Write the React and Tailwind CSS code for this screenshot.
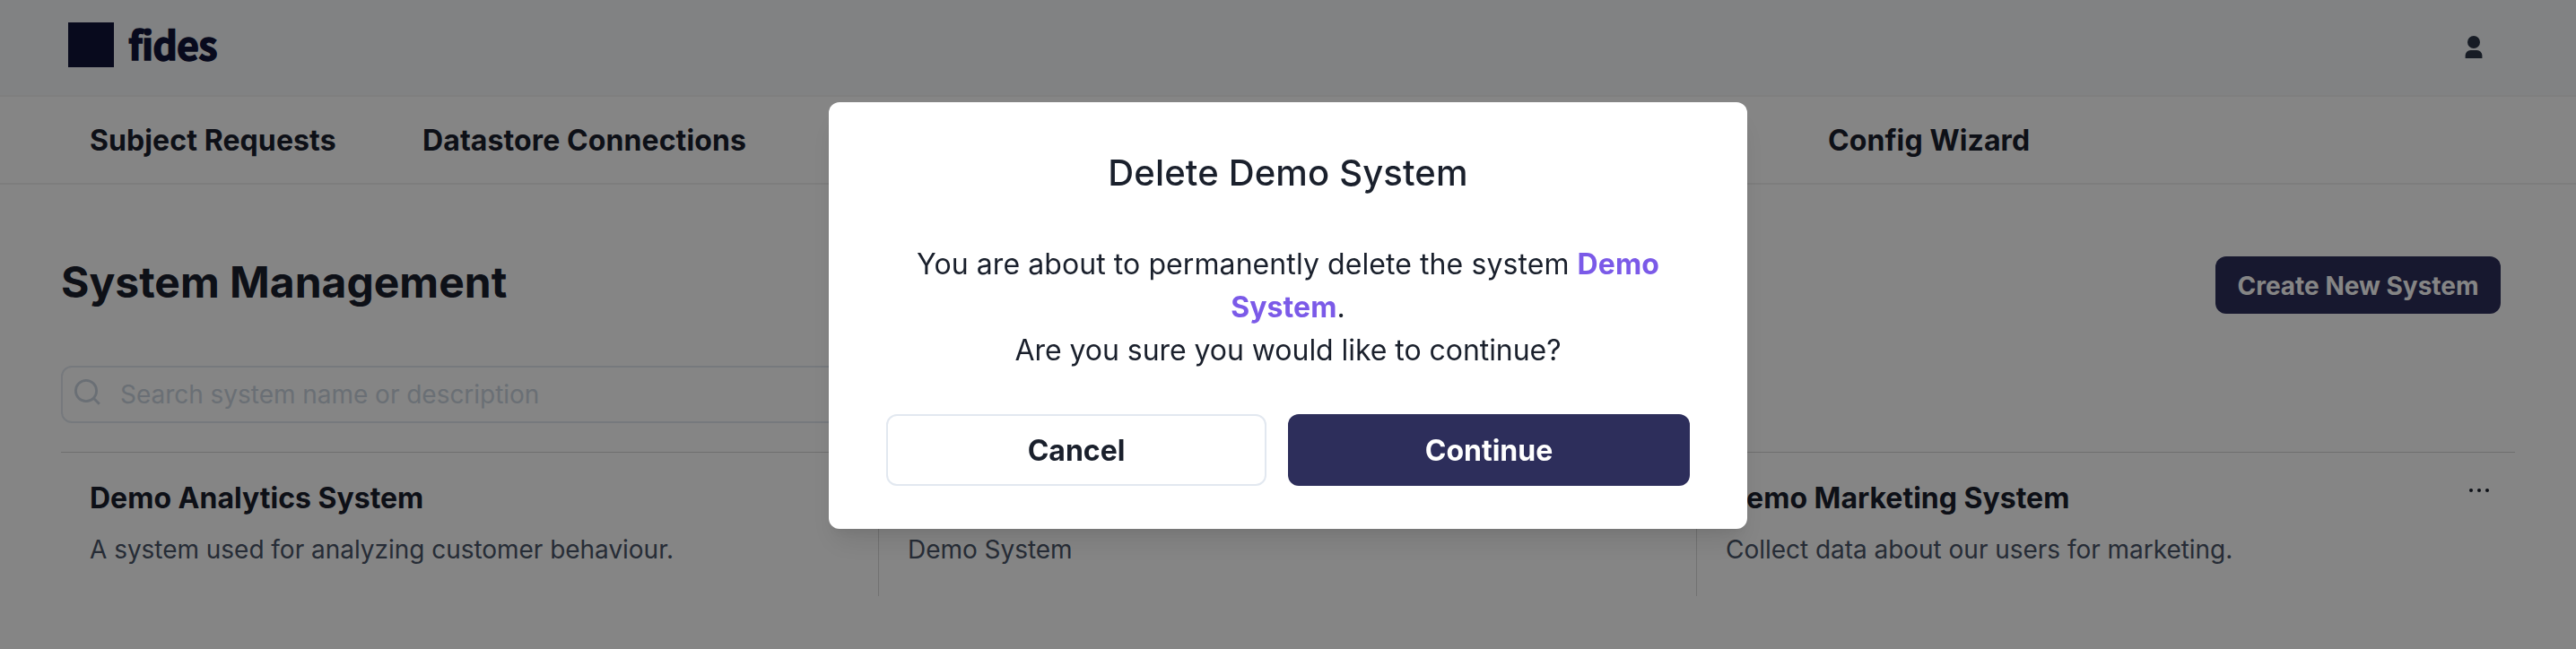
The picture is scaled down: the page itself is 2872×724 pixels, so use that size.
const navLinks = [
  { label: "Subject Requests", gap: "w-[371px]" },
  { label: "Datastore Connections", gap: "w-[1567px]" },
  { label: "Config Wizard", gap: "w-[300px]" },
];

const systems = [
  { name: "Demo Analytics System", description: "A system used for analyzing customer behaviour." },
  { name: "Demo System", description: "Demo System" },
  { name: "Demo Marketing System", description: "Collect data about our users for marketing." },
];

function Header() {
  return (
    <header className="flex h-[108px] items-start justify-between border-b-2 border-[#f3f3f4] bg-[#f7fafc] pl-[76px] pr-[104px]">
      <div className="flex pt-[25px]">
        <div className="h-[50px] w-[51px] bg-[#111439]" />
        <span className="ml-[16px] -mt-[9px] font-['Noto_Sans_CJK_JP',sans-serif] text-[43px] font-bold leading-[64px] tracking-[-0.9px] text-[#111439] [-webkit-text-stroke:1.4px_#111439]">
          fides
        </span>
      </div>
      <svg className="mt-[40px] h-[25px] w-[20px]" viewBox="0 0 20 25" fill="#2d3748">
        <circle cx="10" cy="7" r="7" />
        <path d="M.6 25v-3.2A5.8 5.8 0 0 1 6.4 16h7.2a5.8 5.8 0 0 1 5.8 5.8V25z" />
      </svg>
    </header>
  );
}

function SystemCard({ name, description, showMenu, divided }) {
  return (
    <div className={divided ? "flex h-40 w-[912px] justify-between border-r border-[#d9d9d9] px-8 pt-[27px]" : "flex h-40 w-[912px] justify-between px-8 pt-[27px]"}>
      <div>
        <h2 className="text-[32px] font-bold leading-[48px] text-[#1a202c]">{name}</h2>
        <p className="mt-[12px] text-[28px] leading-[42px] tracking-[-0.03px] text-[#4a5568]">{description}</p>
      </div>
      {showMenu && (
        <svg className="-mr-[4px] mt-[12px] h-[6px] w-[24px]" viewBox="0 0 24 6" fill="#1a202c">
          <circle cx="3" cy="3" r="2" />
          <circle cx="12" cy="3" r="2" />
          <circle cx="21" cy="3" r="2" />
        </svg>
      )}
    </div>
  );
}

function DeleteModal() {
  return (
    <div className="fixed inset-0 flex items-start justify-center bg-black/48 pt-[114px]">
      <div role="dialog" className="h-[476px] w-[1024px] rounded-xl bg-white px-16 pt-[49px] text-center text-[#1a202c] shadow-[0_20px_30px_-6px_rgba(0,0,0,0.1),0_8px_12px_-4px_rgba(0,0,0,0.05)]">
        <h2 className="text-[40px] font-medium leading-[60px] tracking-[0.15px]">Delete Demo System</h2>
        <p className="mt-[48px] text-[32px] leading-[48px]">
          <span className="tracking-[0.08px]">You are about to permanently delete the system <span className="font-bold text-[#7b5ae8]">Demo<br />System</span>.</span>
          <br />
          <span className="tracking-[-0.05px]">Are you sure you would like to continue?</span>
        </p>
        <div className="mt-[47px] flex gap-6 text-[32px] font-bold">
          <button className="h-20 w-[424px] rounded-xl border-2 border-[#e2e8f0] pt-px">Cancel</button>
          <button className="h-20 w-[448px] rounded-xl bg-[#2d2e5b] pt-px text-white">Continue</button>
        </div>
      </div>
    </div>
  );
}

export default function App() {
  return (
    <div className="h-[724px] overflow-hidden bg-white font-['Inter',sans-serif] text-[#1a202c]">
      <Header />
      <nav className="flex h-[98px] items-center border-b-2 border-[#f0f0f0] pl-[100px] pt-[2px] text-[32px] font-bold tracking-[0.1px]">
        {navLinks.map((l) => (
          <a key={l.label} className={`${l.gap} shrink-0 whitespace-nowrap`}>{l.label}</a>
        ))}
      </nav>
      <main className="px-[68px]">
        <div className="flex items-start justify-between pr-4 pt-20">
          <h1 className="text-[48px] font-bold leading-[58px]">System Management</h1>
          <button className="h-16 w-[318px] rounded-xl bg-[#2d2e5b] pt-px text-[28px] font-bold text-white">Create New System</button>
        </div>
        <div className="mt-[58px] flex h-16 w-[1200px] items-center rounded-xl border-2 border-[#e2e8f0] pl-[13px]">
          <svg className="-mt-[4px] h-[30px] w-[30px]" viewBox="0 0 30 30" fill="none" stroke="#cbd5e0" strokeWidth="2.8">
            <circle cx="13" cy="13" r="11.6" />
            <path d="M20.8 20.8l7 7" />
          </svg>
          <span className="ml-[21px] text-[28px] tracking-[-0.03px] text-[#cbd5e0]">Search system name or description</span>
        </div>
        <div className="mt-[32px] flex border-t border-[#d5d5d5]">
          {systems.map((s, i) => (
            <SystemCard key={s.name} {...s} divided={i < 2} showMenu={i === 2} />
          ))}
        </div>
      </main>
      <DeleteModal />
    </div>
  );
}
